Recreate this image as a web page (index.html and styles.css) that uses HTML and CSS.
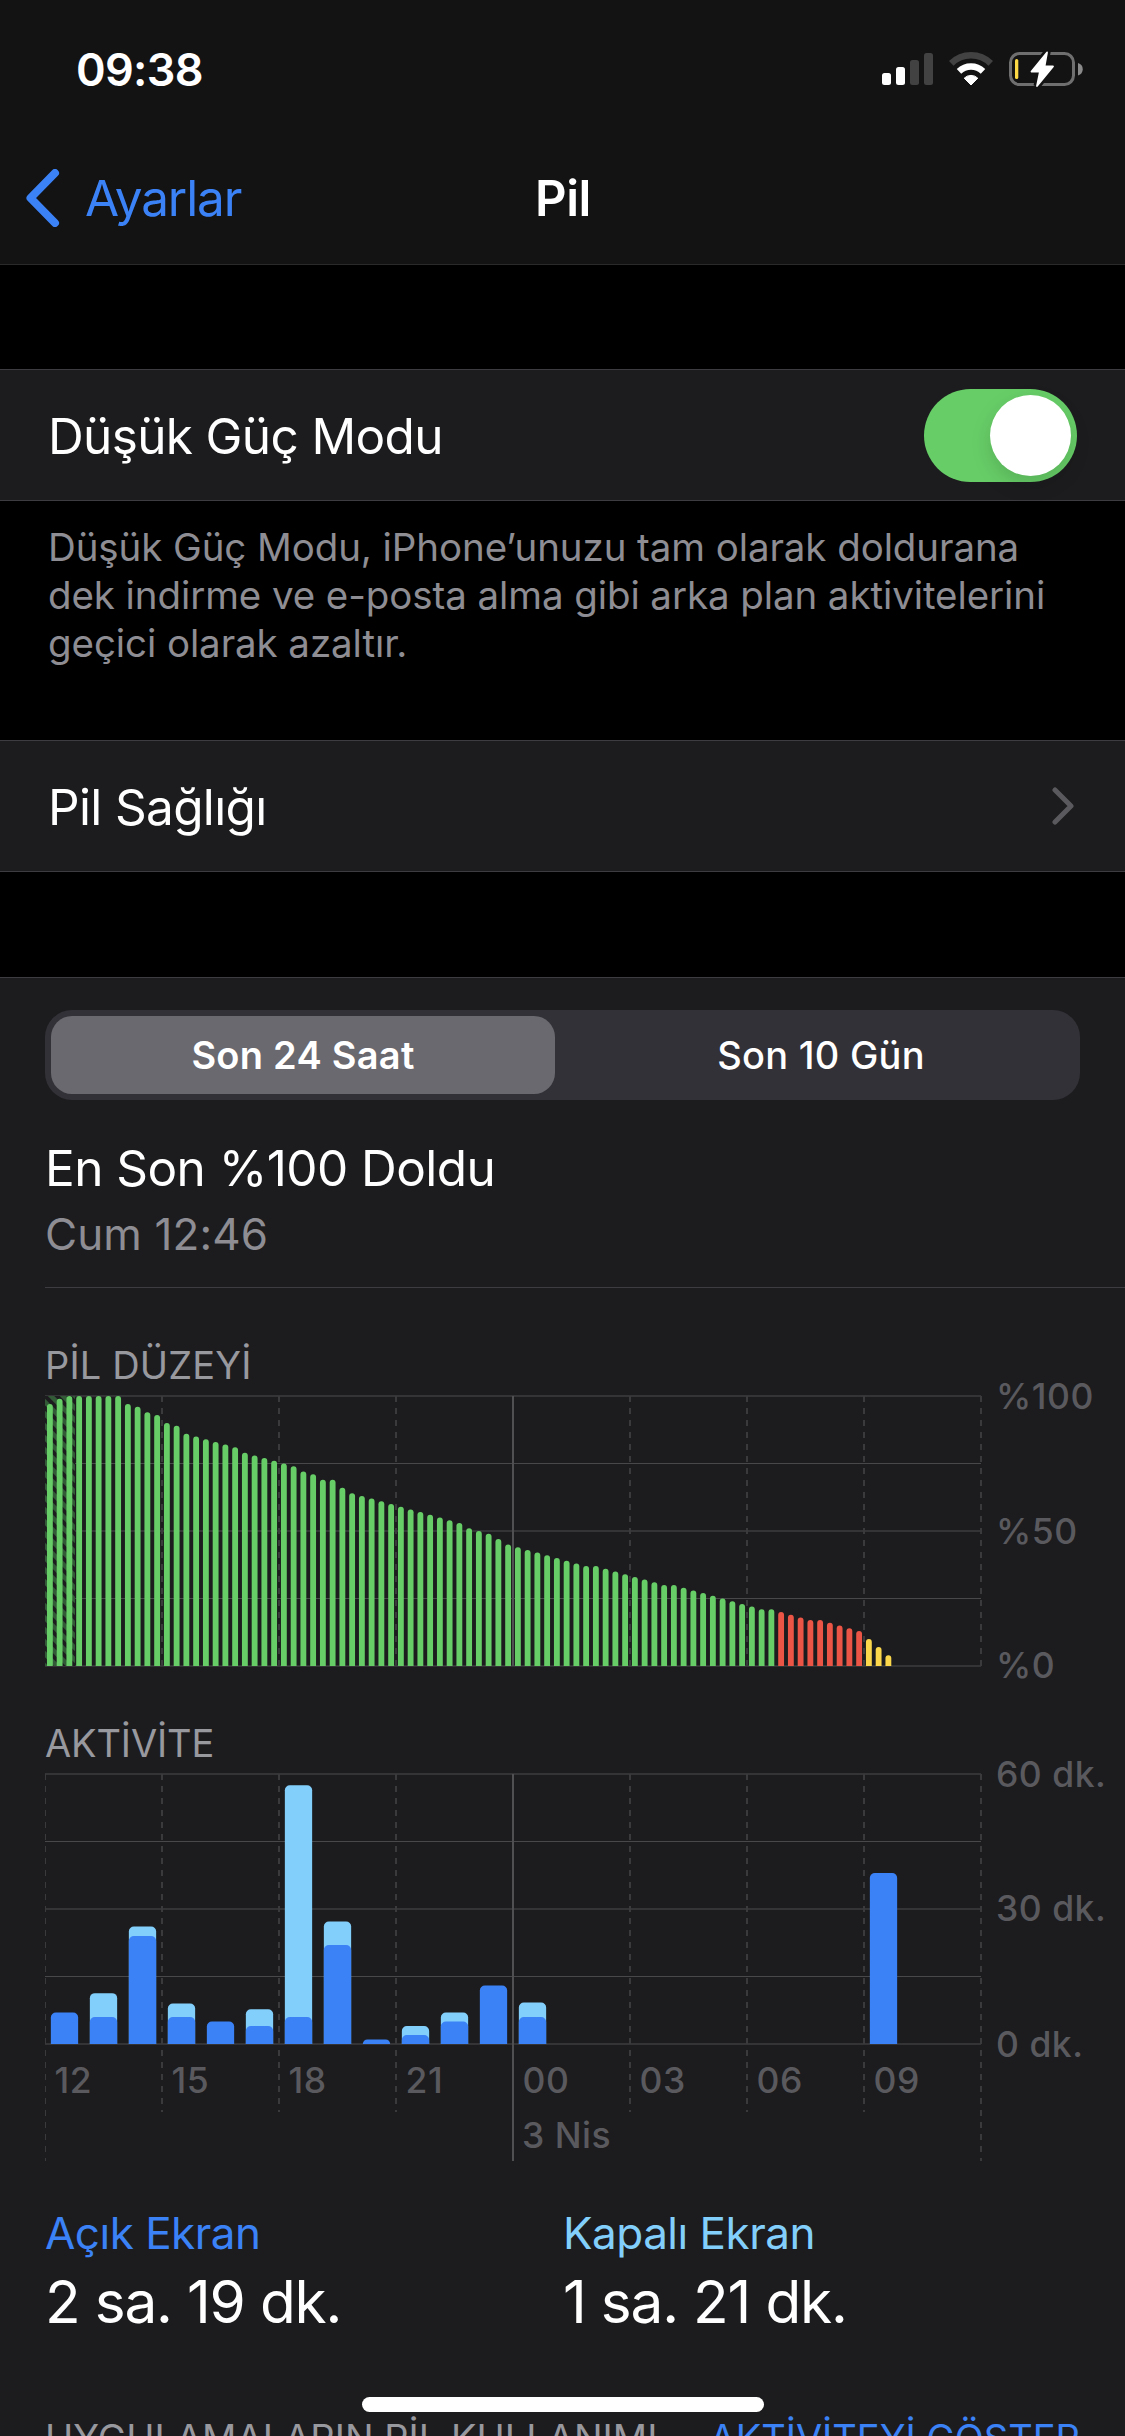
FILE: index.html
```html
<!DOCTYPE html>
<html lang="tr">
<head>
    <meta charset="UTF-8">
    <title>Pil</title>
    <link rel="stylesheet" href="styles.css">
    <script src="charts.js" defer></script>
</head>
<body>
    <header class="header">
        <div class="status-bar">
            <span class="time">09:38</span>
            <div class="status-icons">
                <svg class="signal" width="51" height="36" viewBox="0 0 51 36">
                    <rect x="0" y="22" width="9" height="12" rx="2.5" fill="#fff"/>
                    <rect x="14" y="16" width="9" height="18" rx="2.5" fill="#fff"/>
                    <rect x="28" y="9" width="9" height="25" rx="2.5" fill="#424242"/>
                    <rect x="42" y="2" width="9" height="32" rx="2.5" fill="#424242"/>
                </svg>
                <svg class="wifi" width="46" height="36" viewBox="0 0 46 36">
                    <path d="M3.3 12.4a28 28 0 0 1 39.4 0" fill="none" stroke="#424242" stroke-width="6.5"/>
                    <path d="M11 20.4a17.4 17.4 0 0 1 24 0" fill="none" stroke="#fff" stroke-width="6.5"/>
                    <path d="M16.2 27.2a9.6 9.6 0 0 1 13.6 0L23 34z" fill="#fff" stroke="#fff" stroke-linejoin="round"/>
                </svg>
                <svg class="battery" width="74" height="36" viewBox="0 0 74 36">
                    <rect x="1.500" y="2.500" width="63" height="31" rx="9" fill="none" stroke="#6f6f6f" stroke-width="3"/>
                    <path d="M69 12v12.500a6.500 6.500 0 0 0 0-12.500z" fill="#8a8a8a"/>
                    <rect x="6" y="8" width="3.300" height="20" rx="1.600" fill="#fcd945"/>
                    <path d="M38 1.500L22.500 20.500h8.500L28 35 44 15.500h-8.500z" fill="#131313" stroke="#131313" stroke-width="7"/>
                    <path d="M38 1.500L22.500 20.500h8.500L28 35 44 15.500h-8.500z" fill="#fff" stroke="#fff" stroke-width="1.800" stroke-linejoin="round"/>
                </svg>
            </div>
        </div>
        <nav class="nav-bar">
            <a class="back">
                <svg width="34" height="58" viewBox="0 0 34 58">
                    <path d="M29 4L4.500 29 29 54" fill="none" stroke="#3b82f7" stroke-width="8" stroke-linecap="round" stroke-linejoin="round"/>
                </svg>
                <span class="back-text">Ayarlar</span>
            </a>
            <h1 class="title">Pil</h1>
        </nav>
    </header>

    <main>
        <div class="row">
            <span class="row-label">Düşük Güç Modu</span>
            <span class="toggle"><span class="knob"></span></span>
        </div>
        <p class="note">
            Düşük Güç Modu, iPhone’unuzu tam olarak doldurana<br>
            dek indirme ve e-posta alma gibi arka plan aktivitelerini<br>
            geçici olarak azaltır.
        </p>

        <div class="row">
            <span class="row-label">Pil Sağlığı</span>
            <svg class="chevron" width="23" height="38" viewBox="0 0 23 38">
                <path d="M3 3l16 16L3 35" fill="none" stroke="#5a5a5e" stroke-width="5" stroke-linecap="round" stroke-linejoin="round"/>
            </svg>
        </div>

        <section class="panel">
            <div class="segmented">
                <div class="segment active">Son 24 Saat</div>
                <div class="segment">Son 10 Gün</div>
            </div>
            <h2 class="last-charge">En Son %100 Doldu</h2>
            <p class="charge-time">Cum 12:46</p>
            <hr class="separator">

            <h3 class="chart-title level-title">PİL DÜZEYİ</h3>
            <svg class="chart" id="levelChart" width="1080" height="332" viewBox="0 -8 1080 332"></svg>
            <h3 class="chart-title activity-title">AKTİVİTE</h3>
            <svg class="chart" id="activityChart" width="1080" height="439" viewBox="0 -8 1080 439"></svg>

            <div class="totals">
                <div class="total">
                    <div class="total-label screen-on">Açık Ekran</div>
                    <div class="total-value">2 sa. 19 dk.</div>
                </div>
                <div class="total">
                    <div class="total-label screen-off">Kapalı Ekran</div>
                    <div class="total-value">1 sa. 21 dk.</div>
                </div>
            </div>

            <div class="usage-header">
                <span class="usage-title">UYGULAMALARIN PİL KULLANIMI</span>
                <a class="usage-link">AKTİVİTEYİ GÖSTER</a>
            </div>
        </section>
    </main>
    <div class="home-indicator"></div>
</body>
</html>
```
FILE: styles.css
```css
* {
    box-sizing: border-box;
}

body {
    font-family: Inter, "Liberation Sans", sans-serif;
    margin: 0;
    width: 1125px;
    height: 2436px;
    overflow: hidden;
    position: relative;
    background-color: #000;
    color: #fff;
}

h1, h2, h3, p {
    margin: 0;
    font-weight: 400;
}

svg {
    display: block;
}

.header {
    height: 265px;
    background-color: #131313;
    border-bottom: 1px solid #2a2a2b;
}

.status-bar {
    display: flex;
    justify-content: space-between;
    align-items: center;
    height: 132px;
    padding: 6px 42px 0 76px;
}

.time {
    font-size: 45px;
    font-weight: 600;
    letter-spacing: -0.7px;
}

.status-icons {
    display: flex;
    gap: 15px;
}

.nav-bar {
    display: grid;
    grid-template-columns: 1fr auto 1fr;
    align-items: center;
    height: 132px;
    padding: 0 26px;
}

.back {
    display: flex;
    align-items: center;
    gap: 25px;
    color: #3b82f7;
    font-size: 49.5px;
    letter-spacing: -1.1px;
}

.title {
    font-size: 49px;
    font-weight: 600;
    letter-spacing: -0.4px;
    padding-left: 1px;
}

.row {
    display: flex;
    justify-content: space-between;
    align-items: center;
    height: 132px;
    margin-top: 104px;
    padding: 0 48px;
    background-color: #1c1c1e;
    border-top: 1px solid #3d3d41;
    border-bottom: 1px solid #3d3d41;
}

.row-label {
    font-size: 49.5px;
    letter-spacing: -0.65px;
    padding-top: 1px;
}

.chevron {
    margin-right: 2px;
}

.toggle {
    display: flex;
    justify-content: flex-end;
    width: 153px;
    height: 93px;
    padding: 6px;
    border-radius: 47px;
    background-color: #67ce67;
}

.knob {
    width: 81px;
    height: 81px;
    border-radius: 50%;
    background-color: #fff;
    box-shadow: 0 8px 20px rgba(0, 0, 0, 0.15);
}

.note {
    padding: 22px 0 0 48px;
    font-size: 38.5px;
    line-height: 48px;
    letter-spacing: -0.09px;
    color: #8d8d93;
    white-space: nowrap;
}

.note + .row {
    margin-top: 73px;
}

.panel {
    height: 1459px;
    margin-top: 105px;
    padding: 32px 45px 0;
    background-color: #1c1c1e;
    border-top: 1px solid #3d3d41;
}

.segmented {
    display: flex;
    gap: 6px;
    height: 90px;
    padding: 6px;
    border-radius: 27px;
    background-color: #323137;
}

.segment {
    flex: 1;
    padding-left: 7px;
    border-radius: 21px;
    font-size: 38px;
    font-weight: 500;
    line-height: 78px;
    letter-spacing: 0.25px;
    text-align: center;
}

.segment.active {
    flex: 0 0 504px;
    padding-left: 0;
    background-color: #6a696f;
    font-weight: 600;
}

.last-charge {
    margin-top: 38px;
    font-size: 49.5px;
    line-height: 60px;
    letter-spacing: -0.55px;
}

.charge-time {
    margin-top: 8px;
    font-size: 44px;
    line-height: 56px;
    letter-spacing: 0.1px;
    color: #8d8d93;
}

.separator {
    height: 1px;
    margin: 25px -45px 0 0;
    border: none;
    background-color: #3d3d41;
}

.chart-title {
    font-size: 38px;
    line-height: 46px;
    color: #98989f;
}

.level-title {
    margin-top: 54px;
    letter-spacing: 0.15px;
}

.activity-title {
    letter-spacing: -0.15px;
}

.chart {
    overflow: visible;
}

.axis-label {
    font-size: 35.5px;
    font-weight: 500;
    letter-spacing: 0.5px;
    fill: #5a5a5e;
}

.totals {
    display: grid;
    grid-template-columns: 518px 1fr;
}

.total-label {
    font-size: 44px;
    line-height: 56px;
    letter-spacing: -0.5px;
}

.screen-on {
    color: #3b82f7;
}

.screen-off {
    color: #83cffc;
}

.total-value {
    margin-top: 5px;
    font-size: 58.5px;
    line-height: 72px;
    letter-spacing: -1.2px;
}

.usage-header {
    display: flex;
    justify-content: space-between;
    margin-top: 77px;
    font-size: 38px;
    line-height: 46px;
    color: #98989f;
    white-space: nowrap;
}

.usage-link {
    color: #3b82f7;
}

.home-indicator {
    position: absolute;
    left: 362px;
    top: 2397px;
    width: 402px;
    height: 15px;
    border-radius: 8px;
    background-color: #fff;
}
```
FILE: charts.js
```js
const PLOT_WIDTH = 936;
const PLOT_HEIGHT = 270;

// battery level in percent, one value for every 15 minutes
const levels = [
    97, 99, 100, 100, 100, 100, 100, 100, 97, 96, 94, 93, 90, 89, 86, 85,
    84, 83, 82, 81, 79, 78, 77, 76, 75, 74, 72, 71, 69, 69, 66, 64,
    63, 62, 61, 60, 59, 58, 57, 56, 55, 54, 53, 51, 50, 49, 47, 45,
    44, 43, 42, 41, 40, 39, 38, 37, 37, 36, 35, 34, 33, 32, 31, 30,
    30, 29, 28, 27, 26, 25, 24, 23, 22, 21, 21, 20, 19, 18, 17, 17,
    16, 15, 14, 13, 10, 7, 4
];

// minutes per hour: [total, screen on]
const activity = [
    [7, 7], [11.3, 6], [26.1, 24], [9, 6], [5, 5], [7.7, 4], [57.5, 6], [27.2, 22],
    [1, 1], [4, 2], [7, 5], [13, 13], [9.2, 6], [0, 0], [0, 0], [0, 0],
    [0, 0], [0, 0], [0, 0], [0, 0], [0, 0], [38, 38]
];

const hours = ['12', '15', '18', '21', '00', '03', '06', '09'];

function hline(y, color, width) {
    return `<rect x="0" y="${y}" width="${PLOT_WIDTH}" height="${width}" fill="${color}"/>`;
}

function grid(shortHeight, longHeight) {
    let out = hline(-1, '#343437', 2) + hline(67, '#48484b', 1) + hline(134, '#343437', 2)
        + hline(202, '#48484b', 1) + hline(269, '#343437', 2);
    for (let i = 0; i <= 8; i++) {
        // the first line sits on the edge, only half of it shows
        const x = i === 0 ? 0.5 : i * 117;
        const width = i === 0 ? 1 : 2;
        const height = i % 4 === 0 ? longHeight : shortHeight;
        if (i === 4) {
            out += `<path d="M${x} 0V${height}" stroke="#505053" stroke-width="2"/>`;
        } else {
            out += `<path d="M${x} 0V${height}" stroke="#3a3a3d" stroke-width="${width}" stroke-dasharray="6 6"/>`;
        }
    }
    return out;
}

function label(x, y, text) {
    return `<text class="axis-label" x="${x}" y="${y}">${text}</text>`;
}

function bar(x, value, max, width, radius, color) {
    const h = value / max * PLOT_HEIGHT;
    const r = Math.min(radius, h);
    return `<path d="M${x} ${PLOT_HEIGHT}v${r - h}a${r} ${r} 0 0 1 ${r} ${-r}h${width - 2 * r}a${r} ${r} 0 0 1 ${r} ${r}V${PLOT_HEIGHT}z" fill="${color}"/>`;
}

function levelColor(index) {
    if (index > 83) return '#fad74b';
    if (index > 74) return '#ea5545';
    return '#67ce67';
}

function drawLevels() {
    let out = grid(270, 270);
    // hatched area behind the bars: the phone was charging
    out += `<defs><pattern id="hatch" width="12" height="12" patternUnits="userSpaceOnUse">
        <rect width="12" height="12" fill="#325a37"/>
        <path d="M-3 -3L15 15M-3 9L3 15M9 -3L15 3" stroke="#1c1c1e" stroke-width="4"/>
        </pattern></defs><rect width="30" height="270" fill="url(#hatch)"/>`;
    levels.forEach((value, i) => {
        out += bar(i * 9.75 + 1.95, value, 100, 5.85, 2.9, levelColor(i));
    });
    out += label(951, 13, '%100') + label(951, 148, '%50') + label(951, 282, '%0');
    document.getElementById('levelChart').innerHTML = out;
}

function drawActivity() {
    let out = grid(338, 387);
    activity.forEach(([total, on], i) => {
        if (!total) return;
        const x = i * 39 + 5.85;
        if (total > on) out += bar(x, total, 60, 27.3, 5, '#83cffc');
        out += bar(x, on, 60, 27.3, 5, '#3b82f7');
    });
    out += label(951, 13, '60 dk.') + label(951, 147, '30 dk.') + label(951, 283, '0 dk.');
    hours.forEach((hour, i) => {
        out += label(i * 117 + 9.5, 319, hour);
    });
    out += label(477, 374, '3 Nis');
    document.getElementById('activityChart').innerHTML = out;
}

drawLevels();
drawActivity();
```
